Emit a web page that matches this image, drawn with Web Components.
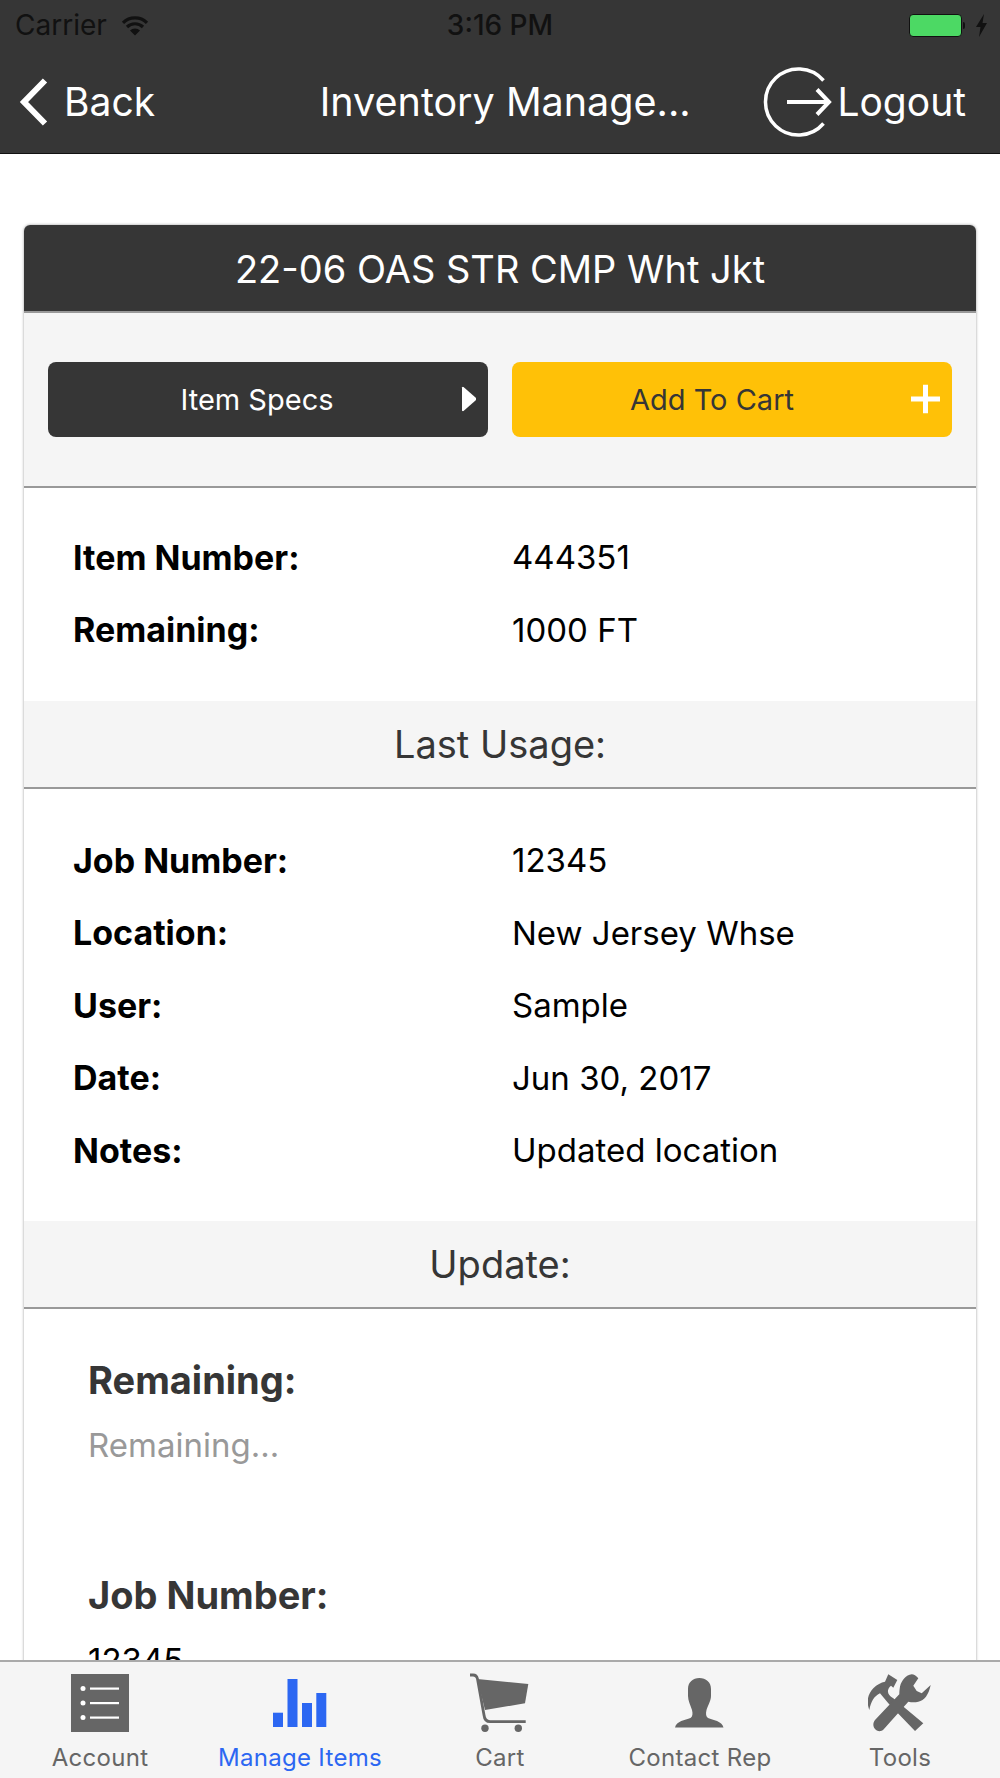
<!DOCTYPE html>
<html lang="en">
<head>
<meta charset="UTF-8">
<title>Inventory Management</title>
<style>
  html, body { margin: 0; height: 1778px; overflow: hidden; background: #fff; }
  body { font-family: Inter, "Liberation Sans", sans-serif; display: flex; flex-direction: column; }
</style>
</head>
<body>
  <app-header title-text="Inventory Manage..."></app-header>
  <app-scroll>
    <item-card title-text="22-06 OAS STR CMP Wht Jkt">
      <div slot="actions" style="display:contents">
        <action-button variant="dark" icon="play">Item Specs</action-button>
        <action-button variant="amber" icon="plus">Add To Cart</action-button>
      </div>
      <info-list top="33" bottom="35">
        <info-row label="Item Number:">444351</info-row>
        <info-row label="Remaining:">1000 FT</info-row>
      </info-list>
      <section-head>Last Usage:</section-head>
      <info-list top="35" bottom="34">
        <info-row label="Job Number:">12345</info-row>
        <info-row label="Location:">New Jersey Whse</info-row>
        <info-row label="User:">Sample</info-row>
        <info-row label="Date:">Jun 30, 2017</info-row>
        <info-row label="Notes:">Updated location</info-row>
      </info-list>
      <section-head>Update:</section-head>
      <form-field label="Remaining:" placeholder="Remaining..."></form-field>
      <form-field label="Job Number:" value="12345"></form-field>
    </item-card>
  </app-scroll>
  <tab-bar>
    <tab-item label="Account" icon="list"></tab-item>
    <tab-item label="Manage Items" icon="bars" active></tab-item>
    <tab-item label="Cart" icon="cart"></tab-item>
    <tab-item label="Contact Rep" icon="person"></tab-item>
    <tab-item label="Tools" icon="tools"></tab-item>
  </tab-bar>

<script>
  // small helper, every element here just fills a shadow root
  class Base extends HTMLElement {
    render(html) {
      this.attachShadow({ mode: "open" }).innerHTML = html;
    }
  }

  customElements.define("app-header", class extends Base {
    connectedCallback() {
      this.render(`
        <style>
          :host { display: block; flex: none; background: #363636; height: 153px; border-bottom: 1px solid #111; color: #fff; }
          .status { height: 45px; display: flex; align-items: center; justify-content: space-between; padding: 5px 12px 0 15px; box-sizing: border-box; color: #111; font-size: 28px; position: relative; }
          .left { display: flex; align-items: center; gap: 14px; }
          .time { position: absolute; left: 0; right: 0; text-align: center; font-weight: 500; font-size: 28px; }
          .right { display: flex; align-items: center; }
          .batt { width: 53px; height: 23px; border: 1.5px solid #111; border-radius: 4px; background: #4cd964; box-sizing: border-box; }
          .nip { width: 2px; height: 7px; background: #111; margin-left: 1px; border-radius: 0 2px 2px 0; }
          .nav { height: 108px; display: flex; align-items: center; font-size: 39px; box-sizing: border-box; padding-top: 5px; }
          .back { display: flex; align-items: center; padding-left: 19px; width: 245px; box-sizing: border-box; gap: 15px; }
          .title { flex: 1; text-align: center; white-space: nowrap; font-size: 39.500px; }
          .logout { display: flex; align-items: center; padding-right: 34px; }
          .logout svg { overflow: visible; }
        </style>
        <div class="status">
          <div class="left"><span>Carrier</span>
            <svg width="28" height="21" viewBox="0 0 28 21"><path d="M14 20.500 9 15.500a7 7 0 0 1 10 0Z" fill="#111"/><path d="M6 12a11.500 11.500 0 0 1 16 0M2 7.800a17 17 0 0 1 24 0" fill="none" stroke="#111" stroke-width="3.200"/></svg>
          </div>
          <div class="time">3:16 PM</div>
          <div class="right"><div class="batt"></div><div class="nip"></div>
            <svg width="13" height="23" viewBox="0 0 13 23" style="margin-left:10px"><path d="M9 0 1 13h4.500L4 23l8-14H7.500Z" fill="#111"/></svg>
          </div>
        </div>
        <div class="nav">
          <div class="back">
            <svg width="30" height="50" viewBox="0 0 30 50"><path d="M26 3.500 5 25l21 21.500" fill="none" stroke="#fff" stroke-width="6"/></svg>
            <span>Back</span>
          </div>
          <div class="title">${this.getAttribute("title-text")}</div>
          <div class="logout">
            <svg width="72" height="72" viewBox="0 0 72 72"><path d="M58.500 14.500A33 33 0 1 0 58.500 57.500" fill="none" stroke="#fff" stroke-width="3.500"/><path d="M22 36H63M52 23.500 64 36 52 48.500" fill="none" stroke="#fff" stroke-width="4"/></svg>
            <span>Logout</span>
          </div>
        </div>`);
    }
  });

  customElements.define("app-scroll", class extends Base {
    connectedCallback() {
      this.render(`
        <style>
          :host { display: block; flex: 1; min-height: 0; overflow: hidden; padding: 71px 24px 0; }
        </style>
        <slot></slot>`);
    }
  });

  customElements.define("item-card", class extends Base {
    connectedCallback() {
      this.render(`
        <style>
          :host { display: block; background: #fff; border-radius: 6px 6px 0 0; box-shadow: 0 0 3px rgba(0,0,0,.4); }
          .head { height: 88px; box-sizing: border-box; padding-top: 1px; background: #363636; color: #fff; border-radius: 6px 6px 0 0; border-bottom: 2px solid #999; display: flex; align-items: center; justify-content: center; font-size: 38px; }
          .actions { height: 173px; background: #f5f5f5; border-bottom: 2px solid #999; display: flex; align-items: center; gap: 24px; padding: 0 24px; }
        </style>
        <div class="head">${this.getAttribute("title-text")}</div>
        <div class="actions"><slot name="actions"></slot></div>
        <slot></slot>`);
    }
  });

  customElements.define("action-button", class extends Base {
    connectedCallback() {
      const amber = this.getAttribute("variant") == "amber";
      const icon = amber
        ? `<svg class="ic" style="right:12px" width="29" height="29" viewBox="0 0 29 29"><path d="M14.500 0V29M0 14.500H29" stroke="#fff" stroke-width="5"/></svg>`
        : `<svg class="ic" style="right:12px" width="15" height="25" viewBox="0 0 15 25"><path d="M1 1a1 1 0 0 1 1.500-.5L14.500 11a2 2 0 0 1 0 3L2.500 24.500A1 1 0 0 1 1 24Z" fill="#fff"/></svg>`;
      this.render(`
        <style>
          :host { display: flex; flex: 1 1 0; position: relative; height: 75px; align-items: center; justify-content: center; border-radius: 8px; font-size: 29px;
            background: ${amber ? "#ffc107" : "#363636"}; color: ${amber ? "#363636" : "#fff"}; }
          .txt { margin-right: ${amber ? 40 : 22}px; }
          .ic { position: absolute; top: 50%; transform: translateY(-50%); margin-top: -1px; }
        </style>
        <div class="txt"><slot></slot></div>${icon}`);
    }
  });

  customElements.define("info-list", class extends Base {
    connectedCallback() {
      this.render(`
        <style>
          :host { display: block; padding: ${this.getAttribute("top")}px 0 ${this.getAttribute("bottom")}px; }
        </style>
        <slot></slot>`);
    }
  });

  customElements.define("info-row", class extends Base {
    connectedCallback() {
      this.render(`
        <style>
          :host { display: flex; height: 72.500px; align-items: center; padding-left: 49px; font-size: 33px; color: #000; }
          .l { width: 439px; flex: none; font-weight: 700; font-size: 34px; }
        </style>
        <div class="l">${this.getAttribute("label")}</div><div><slot></slot></div>`);
    }
  });

  customElements.define("section-head", class extends Base {
    connectedCallback() {
      this.render(`
        <style>
          :host { display: flex; height: 86px; align-items: center; justify-content: center; background: #f5f5f5; border-bottom: 2px solid #999; color: #363636; font-size: 38px; }
        </style>
        <slot></slot>`);
    }
  });

  customElements.define("form-field", class extends Base {
    connectedCallback() {
      const val = this.getAttribute("value");
      const ph = this.getAttribute("placeholder");
      this.render(`
        <style>
          :host { display: block; height: 215px; padding: 46px 0 0 64px; box-sizing: border-box; }
          .l { font-size: 38px; font-weight: 700; color: #363636; line-height: 50px; }
          .v { font-size: 33px; line-height: 50px; margin-top: 15px; color: ${val ? "#000" : "#999"}; }
        </style>
        <div class="l">${this.getAttribute("label")}</div>
        <div class="v">${val || ph}</div>`);
    }
  });

  const tabIcons = {
    list: `<svg width="58" height="58" viewBox="0 0 58 58"><rect width="58" height="58" fill="#666"/><g fill="#fff"><circle cx="12" cy="14.500" r="2.500"/><circle cx="12" cy="29" r="2.500"/><circle cx="12" cy="43.500" r="2.500"/><rect x="19" y="13.500" width="29" height="2.200"/><rect x="19" y="28" width="29" height="2.200"/><rect x="19" y="42.500" width="29" height="2.200"/></g></svg>`,
    bars: `<svg width="58" height="58" viewBox="0 0 58 58" fill="currentColor"><rect x="2" y="38.700" width="10" height="14.300"/><rect x="16.500" y="5" width="10" height="48"/><rect x="31" y="29" width="10" height="24"/><rect x="45.300" y="19" width="10" height="34"/></svg>`,
    cart: `<svg width="58" height="58" viewBox="0 0 58 58" fill="#666" style="overflow:visible"><path d="M-1 1H2C5 1 6 2.500 6.500 5L13 41C13.500 45.500 15.500 47.700 19 47.700H54.700" fill="none" stroke="#666" stroke-width="2.800"/><path d="M6.300 5 57.300 10 54 29.300 14 36Z"/><circle cx="14" cy="54.300" r="3.700"/><circle cx="47.300" cy="54.300" r="3.700"/></svg>`,
    person: `<svg width="50" height="58" viewBox="0 0 50 58" fill="#666"><path d="M24.300 4C31 4 36 8 36 15V22C36 27 33 31 31.500 36 30.500 40 31 42.500 33 44 38 46 47 47 48.500 53.500H0C1.500 47 10 46 15.500 44 17.500 42.500 18 40 17 36 15.500 31 13 27 13 22V15C13 8 18 4 24.300 4Z"/></svg>`,
    tools: `<svg width="64" height="58" viewBox="0 0 64 58" fill="#666"><path d="M1.300 36C-2 27 0 20 5.300 14.300 9 10.500 13 8.500 17 7.700L20.300.3 29.300 6 25.300 13.700 23 11.700C18 16 19.300 21 25.300 24.300L55.300 49.300 47 57 20.300 29.300 12 19.300C6 22 3 28 1.300 36Z"/><path d="M43.700.3C38 1 33.700 6 32 12.500 31.500 15.500 31.300 18 31.300 20.300L7 46C4.500 49 5 53 7.500 55.500 10 58 13.500 57.500 15.500 55.500L40.300 27.700C44 28.500 47 28.500 50.300 27.700 56.500 26.500 60.500 21 62.700 11L53.700 19.300 48.700 17 45.300 11.700 50.300 4.300C48 1.500 46 .3 43.700.3Z"/></svg>`,
  };

  customElements.define("tab-item", class extends Base {
    connectedCallback() {
      const active = this.hasAttribute("active");
      this.render(`
        <style>
          :host { display: flex; flex-direction: column; align-items: center; width: 200px; color: ${active ? "#2c67f2" : "#666"}; }
          .i { height: 58px; display: flex; }
          .t { margin-top: 11px; font-size: 24px; line-height: 30px; letter-spacing: .3px; }
        </style>
        <div class="i">${tabIcons[this.getAttribute("icon")]}</div>
        <div class="t">${this.getAttribute("label")}</div>`);
    }
  });

  customElements.define("tab-bar", class extends Base {
    connectedCallback() {
      this.render(`
        <style>
          :host { display: flex; flex: none; height: 118px; box-sizing: border-box; background: #f5f5f5; border-top: 2px solid #aaa; padding-top: 12px; }
        </style>
        <slot></slot>`);
    }
  });
</script>
</body>
</html>
